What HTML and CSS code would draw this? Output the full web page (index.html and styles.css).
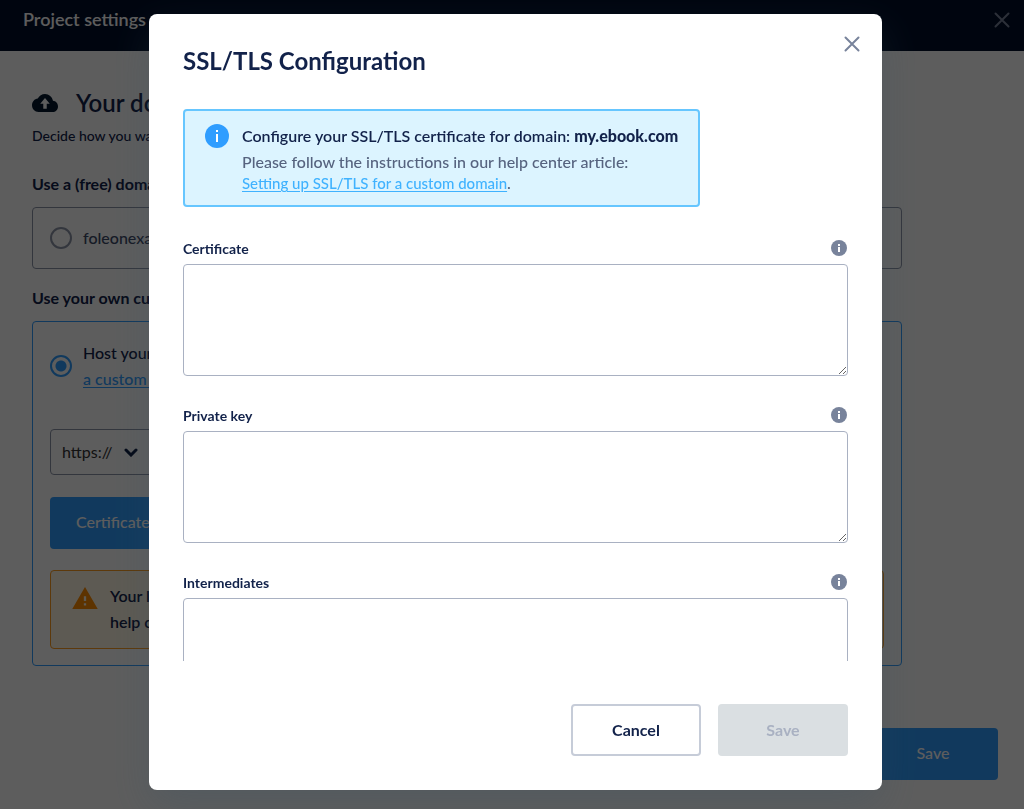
FILE: index.html
```html
<!DOCTYPE html>
<html lang="en">
<head>
  <meta charset="UTF-8" />
  <meta name="viewport" content="width=device-width, initial-scale=1.0" />
  <title>Project settings</title>
  <link rel="stylesheet" href="styles.css">
</head>
<body>
  <div class="page">
    <header class="topbar">
      <span>Project settings</span>
      <button class="close" aria-label="Close settings">
        <svg width="16" height="16" viewBox="0 0 16 16"><path d="M1.5 1.5l13 13M14.5 1.5l-13 13" /></svg>
      </button>
    </header>

    <main class="content">
      <h1>
        <svg class="cloud" width="26" height="18" viewBox="0 4 24 16" preserveAspectRatio="none"><path d="M19.35 10.04C18.67 6.59 15.64 4 12 4 9.11 4 6.6 5.64 5.35 8.04 2.34 8.36 0 10.91 0 14c0 3.31 2.69 6 6 6h13c2.76 0 5-2.24 5-5 0-2.64-2.05-4.78-4.65-4.96zM13.6 12.6v4.4h-3.2v-4.4H7.6L12 7.6l4.4 5z" /></svg>
        Your domain
      </h1>
      <p class="intro">Decide how you want to host</p>

      <h2>Use a (free) domain</h2>
      <div class="card">
        <label class="option">
          <input type="radio" name="domain">
          <span>foleonexample</span>
        </label>
      </div>

      <h2>Use your own custom domain</h2>
      <div class="card card-active">
        <div class="option">
          <input type="radio" name="domain" id="custom" checked>
          <div class="option-text">
            <label for="custom">Host your Doc on</label><br>
            <a href="#">a custom domain</a>
          </div>
        </div>
        <div class="protocol">
          <select aria-label="Protocol">
            <option>https://</option>
          </select>
          <svg width="14" height="9" viewBox="0 0 14 9"><path d="M2 2l5 5 5-5" /></svg>
        </div>
        <button class="btn btn-primary">Certificate setup</button>
        <div class="warning">
          <svg width="26" height="22" viewBox="1 2 22 19"><path d="M1 21h22L12 2 1 21zm12-3h-2v-2h2v2zm0-4h-2v-4h2v4z" /></svg>
          <p>Your login<br>help center</p>
        </div>
      </div>
    </main>

    <footer class="page-footer">
      <button class="btn btn-primary">Save</button>
    </footer>
  </div>

  <div class="overlay">
    <div class="modal" role="dialog" aria-modal="true" aria-labelledby="modal-title">
      <div class="modal-head">
        <h2 id="modal-title">SSL/TLS Configuration</h2>
        <button class="close" aria-label="Close">
          <svg width="16" height="16" viewBox="0 0 16 16"><path d="M1.5 1.5l13 13M14.5 1.5l-13 13" /></svg>
        </button>
      </div>

      <div class="modal-body">
        <div class="notice">
          <svg width="24" height="24" viewBox="0 0 24 24"><circle cx="12" cy="12" r="12" /><path d="M11 10h2v8h-2zM11 6h2v2h-2z" /></svg>
          <div>
            <p class="notice-title">Configure your SSL/TLS certificate for domain: <strong>my.ebook.com</strong></p>
            <p>Please follow the instructions in our help center article:<br>
            <a href="#">Setting up SSL/TLS for a custom domain</a>.</p>
          </div>
        </div>

        <div class="field">
          <div class="field-head">
            <label for="certificate">Certificate</label>
            <svg width="16" height="16" viewBox="0 0 16 16"><circle cx="8" cy="8" r="8" /><path d="M7 7h2v5H7zM7 4h2v2H7z" /></svg>
          </div>
          <textarea id="certificate"></textarea>
        </div>

        <div class="field">
          <div class="field-head">
            <label for="private-key">Private key</label>
            <svg width="16" height="16" viewBox="0 0 16 16"><circle cx="8" cy="8" r="8" /><path d="M7 7h2v5H7zM7 4h2v2H7z" /></svg>
          </div>
          <textarea id="private-key"></textarea>
        </div>

        <div class="field">
          <div class="field-head">
            <label for="intermediates">Intermediates</label>
            <svg width="16" height="16" viewBox="0 0 16 16"><circle cx="8" cy="8" r="8" /><path d="M7 7h2v5H7zM7 4h2v2H7z" /></svg>
          </div>
          <textarea id="intermediates"></textarea>
        </div>
      </div>

      <div class="modal-footer">
        <button class="btn btn-outline">Cancel</button>
        <button class="btn" disabled>Save</button>
      </div>
    </div>
  </div>
</body>
</html>
```
FILE: styles.css
```css
* {
  box-sizing: border-box;
}
body {
  margin: 0;
  font-family: Lato, "Open Sans", sans-serif;
  font-size: 16px;
  color: #12224a;
}
h1, h2, p {
  margin: 0;
}
button, select, textarea {
  font: inherit;
}
a {
  color: #2f9dff;
  text-underline-offset: 2px;
}
.page {
  display: flex;
  flex-direction: column;
  height: 100vh;
  overflow: hidden;
  background: #fff;
}
.topbar {
  display: flex;
  justify-content: space-between;
  align-items: flex-start;
  height: 51px;
  padding: 7px 14px 0 23px;
  background: #020f2b;
  color: #fff;
  font-size: 18px;
  font-weight: 600;
  line-height: 24px;
}
.close {
  display: flex;
  padding: 5px 0;
  border: 0;
  background: none;
}
.close path {
  fill: none;
  stroke: #78839b;
  stroke-width: 2;
  stroke-linecap: round;
}
.content {
  width: 85%;
  margin-left: 32px;
  padding-top: 36px;
}
h1 {
  display: flex;
  align-items: center;
  gap: 18px;
  font-size: 24px;
  font-weight: 600;
  line-height: 32px;
}
.cloud {
  fill: #03182e;
}
.intro {
  margin-top: 7px;
  font-size: 14px;
  font-weight: 500;
  line-height: 20px;
}
.content h2 {
  margin-top: 28px;
  font-size: 16px;
  font-weight: 700;
  line-height: 20px;
}
.card {
  margin-top: 13px;
  padding: 18px 17px;
  border: 1px solid #8d95a8;
  border-radius: 4px;
}
.content .card + h2 {
  margin-top: 19px;
}
.card-active {
  padding-bottom: 16px;
  border-color: #2f9dff;
}
.option {
  display: flex;
  align-items: center;
  gap: 11px;
  line-height: 24px;
  color: #3d4a68;
  font-weight: 500;
}
.option-text {
  line-height: 26px;
  color: #12224a;
}
.option input {
  appearance: none;
  width: 22px;
  height: 22px;
  margin: 0;
  border: 2px solid #8d95a8;
  border-radius: 50%;
}
.option input:checked {
  border-color: #2f9dff;
  background: radial-gradient(circle, #2f9dff 5px, transparent 6px);
}
.protocol {
  display: flex;
  align-items: center;
  width: 240px;
  margin-top: 37px;
}
.protocol select {
  appearance: none;
  width: 100%;
  height: 46px;
  padding: 0 11px 2px;
  border: 1px solid #8d95a8;
  border-radius: 4px;
  background: none;
  color: #333;
}
.protocol svg {
  flex: none;
  margin-left: -166px;
  fill: none;
  stroke: #0b1b40;
  stroke-width: 3;
  stroke-linecap: round;
}
.btn {
  min-width: 130px;
  height: 52px;
  padding: 0 26px 2px;
  border: 0;
  border-radius: 4px;
  font-weight: 700;
}
.btn-primary {
  padding-bottom: 4px;
  background: #2f9dff;
  color: #fff;
  font-weight: 500;
}
.card .btn {
  margin-top: 22px;
}
.btn-outline {
  border: 2px solid #c6ccd8;
  background: #fff;
  color: #12224a;
}
.btn:disabled {
  background: #dadfe2;
  color: #a9b1c2;
}
.warning {
  display: flex;
  gap: 12px;
  margin-top: 21px;
  padding: 12px 21px 13px;
  border: 1px solid #ff9d1e;
  border-radius: 4px;
  background: #fff6e3;
  font-weight: 600;
  line-height: 26px;
}
.warning svg {
  margin-top: 4px;
  fill: #ff8c00;
}
.page-footer {
  display: flex;
  justify-content: flex-end;
  margin-top: auto;
  padding: 0 26px 29px;
}
.overlay {
  position: fixed;
  inset: 0;
  display: flex;
  padding: 14px 142px 19px 149px;
  background: rgba(0, 0, 0, 0.635);
}
.modal {
  display: flex;
  flex-direction: column;
  flex: 1;
  min-width: 0;
  padding: 0 34px 34px;
  border-radius: 8px;
  background: #fff;
  box-shadow: 0 16px 40px rgba(50, 80, 100, 0.25);
}
.modal-head {
  display: flex;
  justify-content: space-between;
  align-items: flex-start;
  padding: 17px 0 32px;
}
.modal-head h2 {
  margin-top: 14px;
  font-size: 24px;
  font-weight: 700;
  line-height: 32px;
}
.modal-head .close {
  margin-right: -12px;
}
.modal-body {
  flex: 1;
  min-height: 0;
  overflow-y: auto;
  scrollbar-width: none;
}
.notice {
  display: flex;
  gap: 13px;
  width: fit-content;
  margin-bottom: 31px;
  padding: 13px 20px 11px;
  border: 2px solid #66c6ff;
  border-radius: 4px;
  background: #dcf4ff;
  color: #56637f;
  font-weight: 500;
  line-height: 21px;
}
.notice svg {
  flex: none;
  fill: #2f9dff;
}
.notice path, .field-head path {
  fill: #fff;
}
.notice-title {
  margin-bottom: 3px;
  color: #12224a;
  font-weight: 600;
  line-height: 24px;
}
.notice a {
  color: #3fb2ff;
  font-size: 15px;
}
.field {
  margin-bottom: 29px;
}
.field-head {
  display: flex;
  justify-content: space-between;
  align-items: center;
  height: 20px;
  margin-bottom: 6px;
  padding-right: 1px;
  font-size: 14px;
  font-weight: 700;
}
.field-head svg {
  fill: #78839b;
}
textarea {
  display: block;
  width: 100%;
  height: 112px;
  padding: 12px;
  border: 1px solid #a9b1c2;
  border-radius: 4px;
  background: #fff;
}
.modal-footer {
  display: flex;
  justify-content: flex-end;
  gap: 17px;
  padding-top: 43px;
}
```
